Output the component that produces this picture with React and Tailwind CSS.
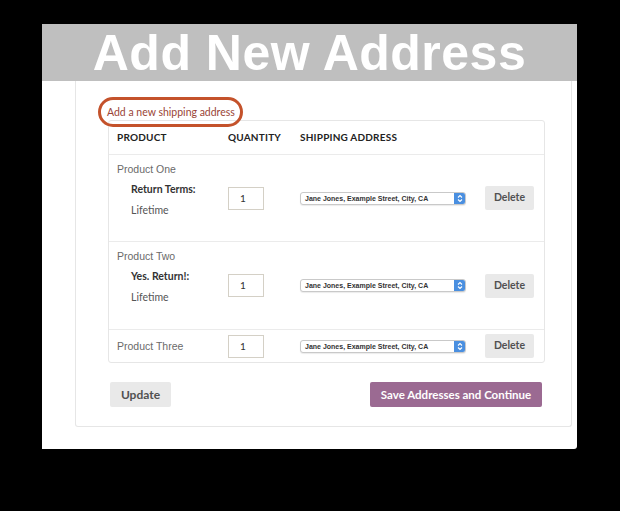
import React from 'react';

const rows = [
  { name: 'Product One', term: 'Return Terms:', value: 'Lifetime', h: 'h-[87px]' },
  { name: 'Product Two', term: 'Yes. Return!:', value: 'Lifetime', h: 'h-[88px]' },
  { name: 'Product Three', h: 'h-[32px]' },
];

const AddressSelect = () => (
  <div className="w-[166px] h-[13px] flex items-center rounded-[3px] border border-[#c9c9c9] bg-white shadow-[0_1px_1px_rgba(0,0,0,0.08)] overflow-hidden">
    <span className="flex-1 pl-[4px] text-[7px] font-bold text-[#333] font-['Liberation_Sans',sans-serif] leading-none whitespace-nowrap">
      Jane Jones, Example Street, City, CA
    </span>
    <span className="w-[11px] h-full bg-[#4a8fe0] flex items-center justify-center">
      <svg width="6" height="9" viewBox="0 0 6 9" fill="none" stroke="white" strokeWidth="1.1">
        <path d="M1 3.5 L3 1.5 L5 3.5" />
        <path d="M1 5.5 L3 7.5 L5 5.5" />
      </svg>
    </span>
  </div>
);

const GrayButton = ({ children, className }) => (
  <button className={`bg-[#e9e9e9] rounded-[2px] font-bold text-[#515151] font-['Lato',sans-serif] ${className}`}>
    {children}
  </button>
);

const Row = ({ row, last }) => (
  <div className={`flex ${row.h} ${last ? '' : 'border-b border-[#ebebeb]'}`}>
    <div className={`w-[119px] pl-[8px] flex flex-col ${row.term ? 'pt-[7px]' : 'justify-center'}`}>
      <span className="text-[10.5px] text-[#6a6a6a] font-['Liberation_Sans',sans-serif] leading-[14px]">{row.name}</span>
      {row.term && (
        <div className="pl-[14px] pt-[6px] flex flex-col gap-[7px] font-['Lato',sans-serif] text-[10.5px] text-[#333] leading-[14px]">
          <span className="font-bold">{row.term}</span>
          <span className="text-[#555]">{row.value}</span>
        </div>
      )}
    </div>
    <div className="w-[72px] flex items-center">
      <div className="w-[36px] h-[23px] border border-[#d4d0c6] bg-white flex items-center pl-[11px] text-[10px] text-[#333] font-['Lato',sans-serif]">
        1
      </div>
    </div>
    <div className="w-[185px] flex items-center">
      <AddressSelect />
    </div>
    <div className="flex items-center">
      <GrayButton className="w-[49px] h-[24px] text-[10.5px]">Delete</GrayButton>
    </div>
  </div>
);

export default function App() {
  return (
    <div className="w-[620px] h-[511px] bg-black pt-[24px] pl-[42px]">
      <div className="w-[535px] h-[425px] bg-white rounded-br-[3px] flex flex-col">
        <div className="h-[57px] bg-[#bfbfbf] flex items-center justify-center">
          <h1 className="text-white font-bold text-[50px] tracking-[0.5px] leading-none font-['Liberation_Sans',sans-serif]">
            Add New Address
          </h1>
        </div>
        <div className="ml-[33px] w-[497px] h-[346px] border-x border-b border-[#e6e6e6] rounded-b-[3px] pl-[32px] flex flex-col">
          <div className="h-[39px] relative">
            <span className="absolute left-[-1px] top-[24px] text-[10.5px] leading-[14px] text-[#9a4436] font-['Lato',sans-serif] whitespace-nowrap">
              Add a new shipping address
            </span>
            <span className="absolute left-[-10px] top-[16px] w-[145px] h-[30px] rounded-full border-[3px] border-[#c4522b] z-10" />
          </div>
          <div className="w-[437px] border border-[#e6e6e6] rounded-[3px] flex flex-col">
            <div className="h-[34px] flex items-center border-b border-[#ebebeb] font-['Lato',sans-serif] font-bold text-[10px] text-[#222] tracking-[0.2px]">
              <span className="w-[119px] pl-[8px]">PRODUCT</span>
              <span className="w-[72px]">QUANTITY</span>
              <span>SHIPPING ADDRESS</span>
            </div>
            {rows.map((r, i) => (
              <Row key={r.name} row={r} last={i === rows.length - 1} />
            ))}
          </div>
          <div className="flex justify-between items-center mt-[19px] pl-[2px] w-[434px]">
            <GrayButton className="w-[61px] h-[25px] text-[12px]">Update</GrayButton>
            <button className="w-[172px] h-[25px] rounded-[2px] bg-[#9b6a92] text-white font-bold text-[11.5px] font-['Lato',sans-serif]">
              Save Addresses and Continue
            </button>
          </div>
        </div>
      </div>
    </div>
  );
}
